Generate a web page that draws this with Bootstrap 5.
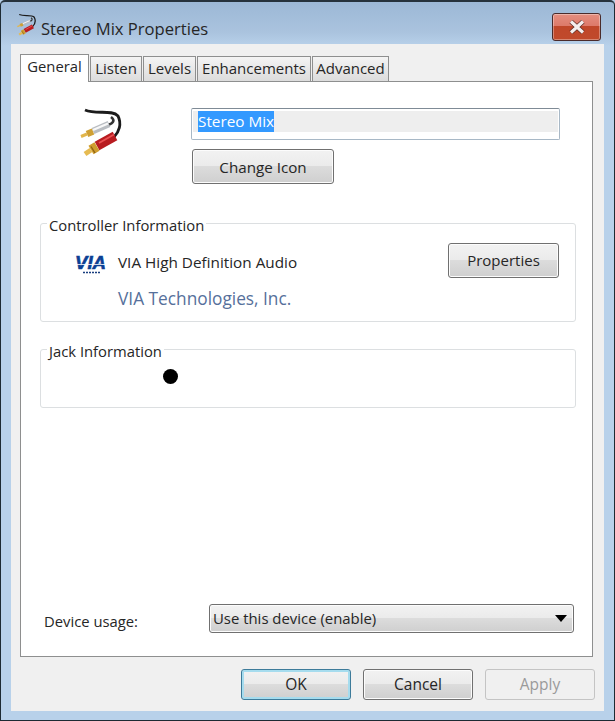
<!DOCTYPE html>
<html lang="en"><head><meta charset="utf-8"><title>Stereo Mix Properties</title>
<link rel="stylesheet" href="https://cdn.jsdelivr.net/npm/bootstrap@5.3.0/dist/css/bootstrap.min.css">
<style>
html,body{margin:0;background:#b6cfe8;}
body{font-family:"Open Sans","Noto Sans",sans-serif;font-size:15px;line-height:20px;color:#262626;}
.win-frame{width:615px;height:721px;border:1px solid #1d2a33;border-top-width:2px;border-top-color:#26323c;border-radius:5px 5px 0 0;background:linear-gradient(#9cb8d6 0,#aac3de 30px,#b8d1ea 44px);padding:0 10px 9px;display:flex;flex-direction:column;}
.title-bar{height:42px;flex:none;display:flex;align-items:flex-start;}
.title-ico{width:21px;height:24px;margin:11px 0 0 5px;flex:none;}
.title-txt{font-size:16.6px;margin:16px 0 0 4px;color:#262626;line-height:22px;}
.close-x{width:49px;height:28px;margin:11px 3px 0 auto;padding:0;border:1px solid #4a2b2b;border-radius:3px;background:linear-gradient(#e48e80 0,#dd7a6a 45%,#c0472a 46%,#c04a2c 100%);display:flex;align-items:center;justify-content:center;box-shadow:inset 0 0 0 1px rgba(255,255,255,.35);}
.client{flex:1;background:#f0f0f0;padding:10px 11px 11px 9px;display:flex;flex-direction:column;}
.tab-row{height:27px;flex:none;border:0;align-items:flex-end;flex-wrap:nowrap;position:relative;z-index:1;gap:1px;}
.tab-item{height:25px;border:1px solid #8e8f8f;border-bottom:0;background:linear-gradient(#f4f4f4,#dcdcdc);font-size:15px;line-height:22px;text-align:center;color:#262626;margin-bottom:0;}
.tab-on{height:28px;margin-bottom:-1px;background:#fff;width:69px;font-size:14.8px;line-height:22px;}
.w-listen{width:52px}.w-levels{width:53px}.w-enh{width:114px}.w-adv{width:77px}
.tab-page{flex:1;background:#fff;border:1px solid #8e8f8f;padding:26px 16px 0 19px;display:flex;flex-direction:column;}
.top-zone{display:flex;height:115px;flex:none;}
.cable-big{width:46px;height:52px;margin:-1px 0 0 38px;flex:none;}
.name-col{margin-left:67px;width:369px;display:flex;flex-direction:column;align-items:flex-start;}
.name-box{width:369px;height:32px;border:1px solid #a8b8c6;border-top-color:#7f8b96;border-radius:2px;background:#fff;padding:2px 6px 7px 6px;}
.name-fill{background:#eee;height:21px;margin:0 -5px;padding-left:5px;line-height:21px;}
.name-sel{background:#3399ff;color:#fff;display:inline-block;height:21px;padding:0;font-size:15.3px;}
.win-btn{border:1px solid #707070;border-radius:3px;background:linear-gradient(#f2f2f2 0,#ebebeb 48%,#dcdcdc 50%,#cfcfcf 100%);box-shadow:inset 0 0 0 1px #fcfcfc;color:#262626;font-size:15px;line-height:1;padding:0;text-align:center;flex:none;}
.btn-icon{width:142px;height:35px;margin:9px 0 0 1px;font-size:15.2px;padding-top:2px;}
.grp-box{border:1px solid #dcdfe1;border-radius:3px;margin:0;position:relative;flex:none;}
.grp-box legend{float:none;width:auto;font-size:14.8px;line-height:20px;margin:0 0 0 6px;padding:3px 2px 0;color:#262626;}
.grp-ctrl{height:110px;margin-top:-11px;}
.grp-jack{height:70px;margin-top:16px;}
.ctrl-row{display:flex;align-items:flex-start;margin-top:8px;}
.via-logo{width:34px;height:20px;margin:12px 0 0 33px;flex:none;overflow:visible;}
.ctrl-name{margin:9px 0 0 10px;font-size:15.3px;}
.ctrl-vendor{margin:10px 0 0 77px;font-size:17.3px;color:#56709b;line-height:22px;}
.btn-props{width:111px;height:35px;margin:0 16px 0 auto;}
.jack-dot{position:absolute;left:122px;top:8px;width:15px;height:15px;background:#000;border-radius:50%;}
.usage-row{margin-top:auto;margin-bottom:23px;display:flex;align-items:center;padding-left:4px;}
.usage-lbl{width:161px;margin-top:4px;font-size:14.8px;}
.combo{width:365px;height:29px;margin-left:4px;display:flex;align-items:center;justify-content:space-between;padding:0 5px 0 3px;text-align:left;font-size:14.9px;}
.combo-arrow{width:0;height:0;border-left:6px solid transparent;border-right:6px solid transparent;border-top:7px solid #000;margin-right:1px;}
.btn-row{display:flex;height:31px;margin-top:12px;padding-left:221px;gap:12px;flex:none;}
.btn-row .win-btn{width:110px;height:31px;font-size:15.5px;}
.btn-ok{border-color:#3d7b9a!important;box-shadow:inset 0 0 0 2px #a6dcee!important;}
.btn-off{border-color:#c4c4c4!important;background:#f0f0f0!important;color:#9a9a9a!important;box-shadow:none!important;opacity:1!important;}
</style></head><body>
<svg width="0" height="0" style="position:absolute"><defs><symbol id="rca" viewBox="0 0 46 52">
<path d="M7 3C18 8 34 2 40 9C44 17 41 25 36 30" fill="none" stroke="#1c1c1c" stroke-width="2.8"/>
<path d="M33 10C37 13 36 16 30 18" fill="none" stroke="#333" stroke-width="2.6"/>
<path d="M15 24L31 17" stroke="#b9bdc2" stroke-width="6.5"/><path d="M15 23L30 16.5" stroke="#f8f8f8" stroke-width="2.2"/>
<path d="M9 27L15 24.5" stroke="#cfa034" stroke-width="6.5"/><path d="M3 29.5L9 27" stroke="#e2b64c" stroke-width="3"/>
<path d="M19 39L37 29" stroke="#b81c20" stroke-width="9.5"/><path d="M21 36L36 27.5" stroke="#ea5052" stroke-width="2"/>
<path d="M13 43L19 39.5" stroke="#cf9d2e" stroke-width="10"/><path d="M7 47L13 43" stroke="#e6bb52" stroke-width="5"/><path d="M13 39.5L17 46" stroke="#8f6414" stroke-width="1.4"/>
</symbol></defs></svg>
<div class="win-frame">
 <div class="title-bar">
  <svg class="title-ico"><use href="#rca"/></svg>
  <span class="title-txt">Stereo Mix Properties</span>
  <button class="close-x" aria-label="Close"><svg width="18" height="14" viewBox="0 0 18 14"><path d="M3 1.5L15 12.5M15 1.5L3 12.5" stroke="#5a2a22" stroke-width="4.6"/><path d="M3 1.5L15 12.5M15 1.5L3 12.5" stroke="#f4efee" stroke-width="3.2"/></svg></button>
 </div>
 <div class="client">
  <ul class="nav tab-row">
   <li class="tab-item tab-on">General</li><li class="tab-item w-listen">Listen</li><li class="tab-item w-levels">Levels</li><li class="tab-item w-enh">Enhancements</li><li class="tab-item w-adv">Advanced</li>
  </ul>
  <div class="tab-page">
   <div class="top-zone">
    <svg class="cable-big"><use href="#rca"/></svg>
    <div class="name-col">
     <div class="name-box"><div class="name-fill"><span class="name-sel">Stereo Mix</span></div></div>
     <button class="win-btn btn-icon">Change Icon</button>
    </div>
   </div>
   <fieldset class="grp-box grp-ctrl"><legend>Controller Information</legend>
    <div class="ctrl-row">
     <svg class="via-logo" viewBox="0 0 34 20"><text x="1" y="14" font-family="Liberation Sans" font-weight="700" font-style="italic" font-size="18" fill="#0b3f94" stroke="#0b3f94" stroke-width=".6" textLength="31" lengthAdjust="spacingAndGlyphs">VIA</text><path d="M1 9.5H32" stroke="#fff" stroke-width=".8"/><path d="M9 17.5H26" stroke="#1a3f7f" stroke-width="1.6" stroke-dasharray="2 1"/></svg>
     <div class="ctrl-name">VIA High Definition Audio</div>
     <button class="win-btn btn-props">Properties</button>
    </div>
    <div class="ctrl-vendor">VIA Technologies, Inc.</div>
   </fieldset>
   <fieldset class="grp-box grp-jack"><legend>Jack Information</legend><span class="jack-dot"></span></fieldset>
   <div class="usage-row">
    <span class="usage-lbl">Device usage:</span>
    <button class="win-btn combo"><span>Use this device (enable)</span><span class="combo-arrow"></span></button>
   </div>
  </div>
  <div class="btn-row">
   <button class="win-btn btn-ok">OK</button><button class="win-btn">Cancel</button><button class="win-btn btn-off" disabled>Apply</button>
  </div>
 </div>
</div>
<script src="https://cdn.jsdelivr.net/npm/bootstrap@5.3.0/dist/js/bootstrap.bundle.min.js"></script>
</body></html>
